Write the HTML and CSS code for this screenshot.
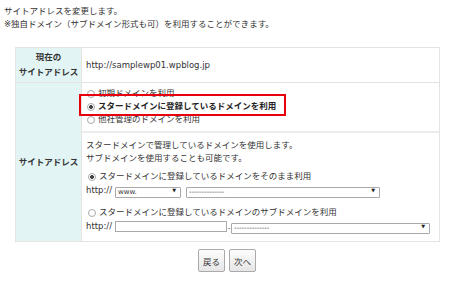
FILE: index.html
```html
<!DOCTYPE html>
<html lang="ja">
<head>
  <meta charset="UTF-8">
  <title>サイトアドレス変更</title>
  <link rel="stylesheet" href="styles.css">
</head>
<body>
  <div class="lead">
    <p>サイトアドレスを変更します。</p>
    <p>※独自ドメイン（サブドメイン形式も可）を利用することができます。</p>
  </div>

  <table class="form-table">
    <tr class="row-current">
      <th>現在の<br>サイトアドレス</th>
      <td><span class="url">http://samplewp01.wpblog.jp</span></td>
    </tr>
    <tr class="row-address">
      <th>サイトアドレス</th>
      <td>
        <div class="choice">
          <label class="radio"><input type="radio" name="type"> 初期ドメインを利用</label>
          <label class="radio strong"><input type="radio" name="type" checked> スタードメインに登録しているドメインを利用</label>
          <label class="radio"><input type="radio" name="type"> 他社管理のドメインを利用</label>
          <span class="highlight"></span>
        </div>
        <div class="detail">
          <p>スタードメインで管理しているドメインを使用します。<br>サブドメインを使用することも可能です。</p>
          <label class="radio opt"><input type="radio" name="mode" checked> スタードメインに登録しているドメインをそのまま利用</label>
          <div class="url-row">
            <span class="scheme">http://</span>
            <span class="select-wrap w-www"><select><option>www.</option></select></span>
            <span class="select-wrap w-domain"><select><option>--------------</option></select></span>
          </div>
          <label class="radio opt"><input type="radio" name="mode"> スタードメインに登録しているドメインのサブドメインを利用</label>
          <div class="url-row last">
            <span class="scheme">http://</span>
            <input type="text" class="sub-input">
            <span class="dot">.</span>
            <span class="select-wrap w-domain2"><select><option>--------------</option></select></span>
          </div>
        </div>
      </td>
    </tr>
  </table>

  <div class="buttons">
    <button type="button">戻る</button>
    <button type="button">次へ</button>
  </div>
</body>
</html>
```

FILE: styles.css
```css
html, body { margin: 0; padding: 0; background: #fff; }
body { padding: 5px 4px; font-family: "DejaVu Sans", "Noto Sans CJK JP", sans-serif; font-size: 8.5px; line-height: 13px; color: #333; }
p { margin: 0; }
.lead { margin-bottom: 16px; }

.form-table { margin-left: 11px; width: 425px; border-collapse: collapse; }
.form-table th { width: 67px; padding: 0; background: #e2f4f4; border: 1px solid #e3e3e3; font-weight: bold; text-align: center; line-height: 15px; }
.form-table td { padding: 0; border: 1px solid #e3e3e3; vertical-align: middle; }
.row-current { height: 35px; }
.row-current td { padding-left: 4px; }

.choice { position: relative; padding: 4px 0 5px 5px; border-bottom: 2px solid #ececec; display: flex; flex-direction: column; }
.radio { display: flex; align-items: center; gap: 1px; line-height: 13px; }
.radio.strong { font-weight: bold; color: #222; }
.radio input { -webkit-appearance: none; appearance: none; margin: 0 2px 0 0; width: 8px; height: 8px; border: 1px solid #a9a9a9; border-radius: 50%; background: #fff; box-sizing: border-box; }
.radio input:checked { background: radial-gradient(circle, #444 0, #444 1.6px, #fff 2.2px); }
.highlight { position: absolute; left: -3px; top: 11px; width: 203px; height: 18px; border: 2px solid #e8000d; }

.detail { padding: 6px 4px 8px 4px; }
.detail p { margin-bottom: 5px; }
.radio.opt { margin-left: 2px; }
.url-row { display: flex; align-items: center; height: 13px; margin-top: 1px; margin-bottom: 9px; }
.url-row.last { margin-bottom: 0; }
.scheme { width: 29px; }
.select-wrap { position: relative; display: block; height: 11px; margin-right: 5px; }
.select-wrap::after { content: "\25BC"; position: absolute; right: 5px; top: 0; font-size: 5px; line-height: 11px; color: #222; pointer-events: none; }
.select-wrap select { -webkit-appearance: none; appearance: none; width: 100%; height: 11px; margin: 0; padding: 0 0 0 2px; border: 1px solid #a9a9a9; border-radius: 1px; background: #fff; font-family: "DejaVu Sans", sans-serif; font-size: 7px; line-height: 9px; color: #333; box-sizing: border-box; }
.w-www { width: 66px; }
.w-domain { width: 194px; }
.w-domain2 { width: 199px; }
.sub-input { width: 112px; height: 11px; margin: 0; padding: 0; border: 1px solid #a9a9a9; box-sizing: border-box; }
.dot { width: 4px; text-align: center; }

.buttons { display: flex; justify-content: center; gap: 4px; margin-top: 7px; padding-left: 4px; }
.buttons button { width: 27px; height: 23px; padding: 0; font-family: "Noto Sans CJK JP", sans-serif; font-size: 8.5px; color: #333; border: 1px solid #aaa; border-radius: 2px; background: linear-gradient(#fdfdfd, #e6e6e6); }
```
